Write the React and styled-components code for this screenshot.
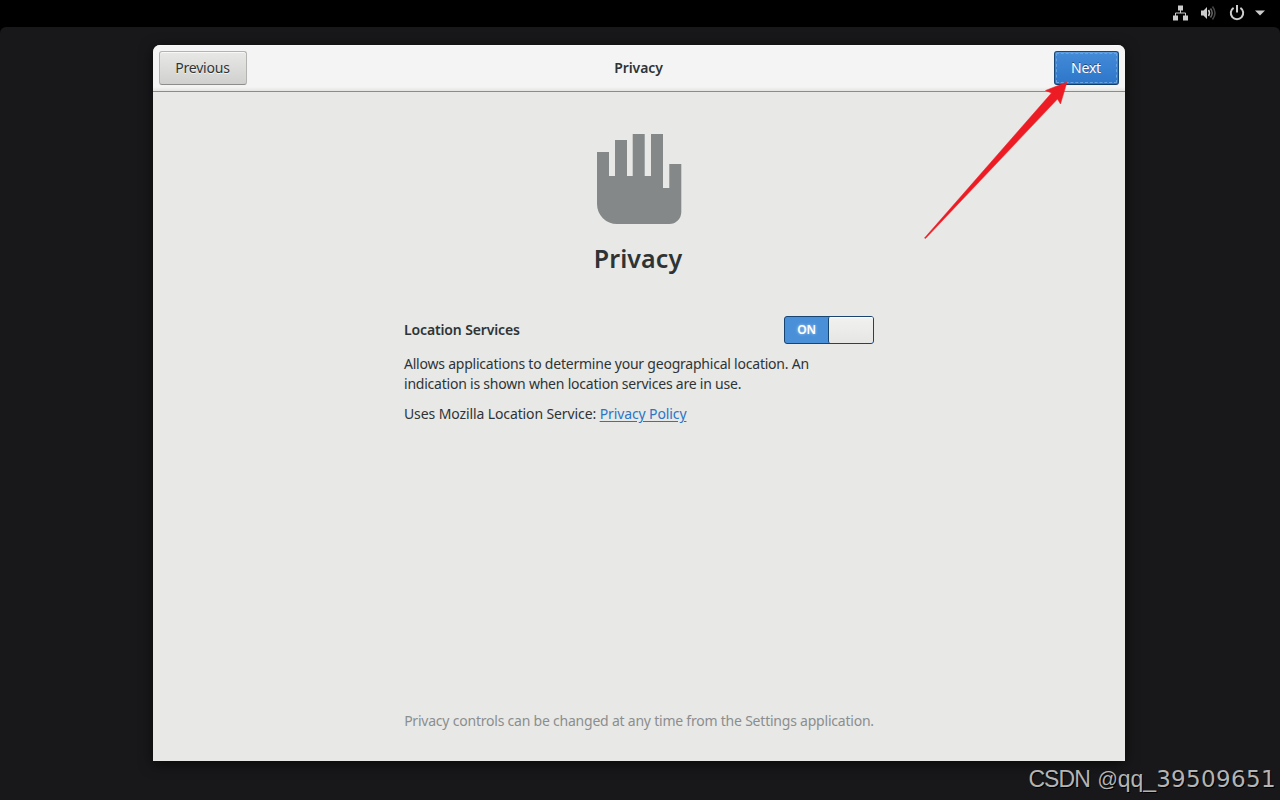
import React from 'react';
import styled, { createGlobalStyle } from 'styled-components';

function App() {
    return (
        <Screen>
            <GlobalStyle />
            <TopBar>
                <NetworkIcon />
                <VolumeIcon />
                <PowerIcon />
                <CaretIcon />
            </TopBar>
            <Desktop>
                <Window>
                    <HeaderBar>
                        <Button $width="88px">Previous</Button>
                        <WindowTitle>Privacy</WindowTitle>
                        <Button $width="65px" $suggested>Next</Button>
                    </HeaderBar>
                    <Page>
                        <HandIcon />
                        <PageTitle>Privacy</PageTitle>
                        <Settings>
                            <Row>
                                <RowTitle>Location Services</RowTitle>
                                <Switch>
                                    <SwitchLabel>ON</SwitchLabel>
                                    <SwitchKnob />
                                </Switch>
                            </Row>
                            <Text $spacing="-0.22px">
                                Allows applications to determine your geographical location. An<br />
                                indication is shown when location services are in use.
                            </Text>
                            <Text $spacing="-0.11px">
                                Uses Mozilla Location Service: <a href="#policy">Privacy Policy</a>
                            </Text>
                        </Settings>
                        <Footer>Privacy controls can be changed at any time from the Settings application.</Footer>
                    </Page>
                </Window>
            </Desktop>
            <Arrow />
            <Watermark>
                <span>CSDN </span>
                <At>@</At>
                qq_
                <Digits>39509651</Digits>
            </Watermark>
        </Screen>
    )
}

export default App;

function NetworkIcon() {
    return (
        <Icon width="16" height="16" viewBox="0 0 16 16">
            <path d="M6 0.500h5v5H6zM1 10.500h5v5H1zM11 10.500h5v5h-5z" />
            <path d="M8.500 5v3M3.500 11V8h10v3" fill="none" stroke="#ccc" />
        </Icon>
    )
}

function VolumeIcon() {
    return (
        <Icon width="16" height="16" viewBox="0 0 16 16">
            <path d="M0 5.500h2.500L6 2v12L2.500 10.500H0z" />
            <g fill="none" stroke="#ccc" strokeWidth="1.500">
                <path d="M7.500 5q2 3 0 6" />
                <path d="M9.500 3.500q3.400 4.500 0 9" opacity="0.500" />
                <path d="M11.500 1.500q5 6.500 0 13" opacity="0.350" />
            </g>
        </Icon>
    )
}

function PowerIcon() {
    return (
        <Icon width="16" height="16" viewBox="0 0 16 16">
            <path d="M4.600 2.800A6.200 6.200 0 1 0 11.400 2.800M8 0V7.500" fill="none" stroke="#ccc" strokeWidth="2" />
        </Icon>
    )
}

function CaretIcon() {
    return (
        <Icon width="10" height="6" viewBox="0 0 10 6">
            <path d="M0 0.500h10L5 5.500z" />
        </Icon>
    )
}

function HandIcon() {
    return (
        <Hand width="86" height="90" viewBox="0 0 86 90">
            <path d="M0 18H12V42H18V6H30V42H35.700V0H47.700V42H54V0H66V54H72.300V30H84.300V78A12 12 0 0 1 72.300 90H20A20 20 0 0 1 0 70Z" fill="#858888" />
        </Hand>
    )
}

function Arrow() {
    return (
        <ArrowSvg width="144" height="158" viewBox="0 0 144 158">
            <path d="M143 0L121.500 8.500L127.500 11L0.500 156L1.500 156.500L133.500 17L136.500 22Z" fill="#ed1c24" stroke="#ed1c24" strokeWidth="0.500" />
        </ArrowSvg>
    )
}

const GlobalStyle = createGlobalStyle`
    body{
        margin: 0;
        background: #000;
        font-family: "Noto Sans", "Open Sans", sans-serif;
        font-size: 14px;
        color: #2e3436;
    }

    *{
        box-sizing: border-box;
    }
`

const Screen = styled.div`
    position: relative;
    width: 1280px;
    height: 800px;
    overflow: hidden;
    display: flex;
    flex-direction: column;
`

const TopBar = styled.div`
    height: 27px;
    padding: 0 15px 1px 0;
    display: flex;
    align-items: center;
    justify-content: flex-end;
    gap: 12px;

    svg:first-child{
        margin-right: 1px;
    }

    svg:last-child{
        margin-left: -2px;
    }
`

const Icon = styled.svg`
    fill: #ccc;
    flex: none;
`

const Desktop = styled.div`
    flex: 1;
    padding: 18px 155px 39px 153px;
    background: #18181a;
    border-radius: 6px 6px 0 0;
`

const Window = styled.div`
    height: 716px;
    display: flex;
    flex-direction: column;
    background: #e8e8e6;
    border-radius: 7px 7px 0 0;
    box-shadow: 0 3px 14px rgba(0, 0, 0, 0.6);
    overflow: hidden;
`

const HeaderBar = styled.div`
    height: 47px;
    padding: 6px;
    display: flex;
    align-items: flex-start;
    justify-content: space-between;
    background: linear-gradient(#fff 0, #f4f4f4 1px, #f4f4f4 42px, #e4e4e2 46px);
    border-bottom: 1px solid #8b8b87;
`

const Button = styled.button`
    width: ${({ $width }) => $width};
    height: 34px;
    padding: 0 1px 0 0;
    font: inherit;
    line-height: 30px;
    letter-spacing: -0.2px;
    border-radius: 3px;
    color: ${({ $suggested }) => $suggested ? '#fff' : '#2e3436'};
    border: 1px solid ${({ $suggested }) => $suggested ? '#184878' : '#b3b3af'};
    border-bottom-color: ${({ $suggested }) => $suggested ? '#103e6c' : '#8d8d89'};
    background: ${({ $suggested }) => $suggested
        ? 'linear-gradient(#448bd8, #2d76c9)'
        : 'linear-gradient(#e8e8e6, #d0d0ce)'};
    box-shadow: inset 0 1px ${({ $suggested }) => $suggested ? '#5a9be0' : '#f8f8f7'};
    text-shadow: ${({ $suggested }) => $suggested ? '0 -1px rgba(0, 0, 0, 0.45)' : '0 1px rgba(255, 255, 255, 0.7)'};
    outline: ${({ $suggested }) => $suggested ? '1px dashed #69a2e0' : 'none'};
    outline-offset: -3px;
`

const WindowTitle = styled.div`
    flex: 1;
    padding-right: 24px;
    line-height: 34px;
    font-weight: 600;
    text-align: center;
    letter-spacing: -0.1px;
`

const Page = styled.div`
    flex: 1;
    padding-top: 42px;
    display: flex;
    flex-direction: column;
    align-items: center;
`

const Hand = styled.svg`
    flex: none;
    margin-left: 2px;
`

const PageTitle = styled.h1`
    margin: 16px 2px 0 0;
    font-size: 25px;
    line-height: 36px;
    font-weight: 600;
    letter-spacing: 0.1px;
`

const Settings = styled.div`
    width: 470px;
    margin-top: 40px;
`

const Row = styled.div`
    height: 28px;
    display: flex;
    align-items: center;
    justify-content: space-between;
`

const RowTitle = styled.div`
    padding-bottom: 2px;
    font-weight: 600;
    letter-spacing: -0.13px;
`

const Switch = styled.div`
    width: 90px;
    height: 28px;
    display: flex;
    background: #4a90d9;
    border: 1px solid #184472;
    border-radius: 3px;
`

const SwitchLabel = styled.div`
    flex: 1;
    line-height: 26px;
    text-align: center;
    font-size: 12px;
    font-weight: 600;
    letter-spacing: -0.3px;
    color: #fff;
    text-shadow: 0 0 3px rgba(255, 255, 255, 0.6);
`

const SwitchKnob = styled.div`
    width: 45px;
    border-left: 1px solid #184472;
    border-radius: 2px;
    background: linear-gradient(#f1f1f0, #e6e6e4);
    box-shadow: inset 0 1px #fff;
`

const Text = styled.p`
    margin: 10px 0 0;
    line-height: 20px;
    letter-spacing: ${({ $spacing }) => $spacing};
    white-space: nowrap;

    a{
        color: #2a76c6;
        text-underline-offset: 2px;
    }
`

const Footer = styled.div`
    margin: auto 0 30px;
    line-height: 20px;
    letter-spacing: -0.22px;
    color: #8b8e8f;
    white-space: nowrap;
`

const ArrowSvg = styled.svg`
    position: absolute;
    left: 924px;
    top: 82px;
`

const Watermark = styled.div`
    position: absolute;
    right: 4px;
    bottom: 7px;
    font-family: "Liberation Sans", Arial, sans-serif;
    font-size: 23px;
    line-height: 28px;
    color: #b4b4b4;
    text-shadow: 1px 1px #000;
    white-space: pre;

    span:first-child{
        letter-spacing: -0.9px;
        margin-right: 2px;
    }
`

const At = styled.span`
    font-size: 20px;
    line-height: 1;
    vertical-align: 1px;
`

const Digits = styled.span`
    font-family: "DejaVu Sans", sans-serif;
    font-size: 23px;
    letter-spacing: 0.35px;
`
